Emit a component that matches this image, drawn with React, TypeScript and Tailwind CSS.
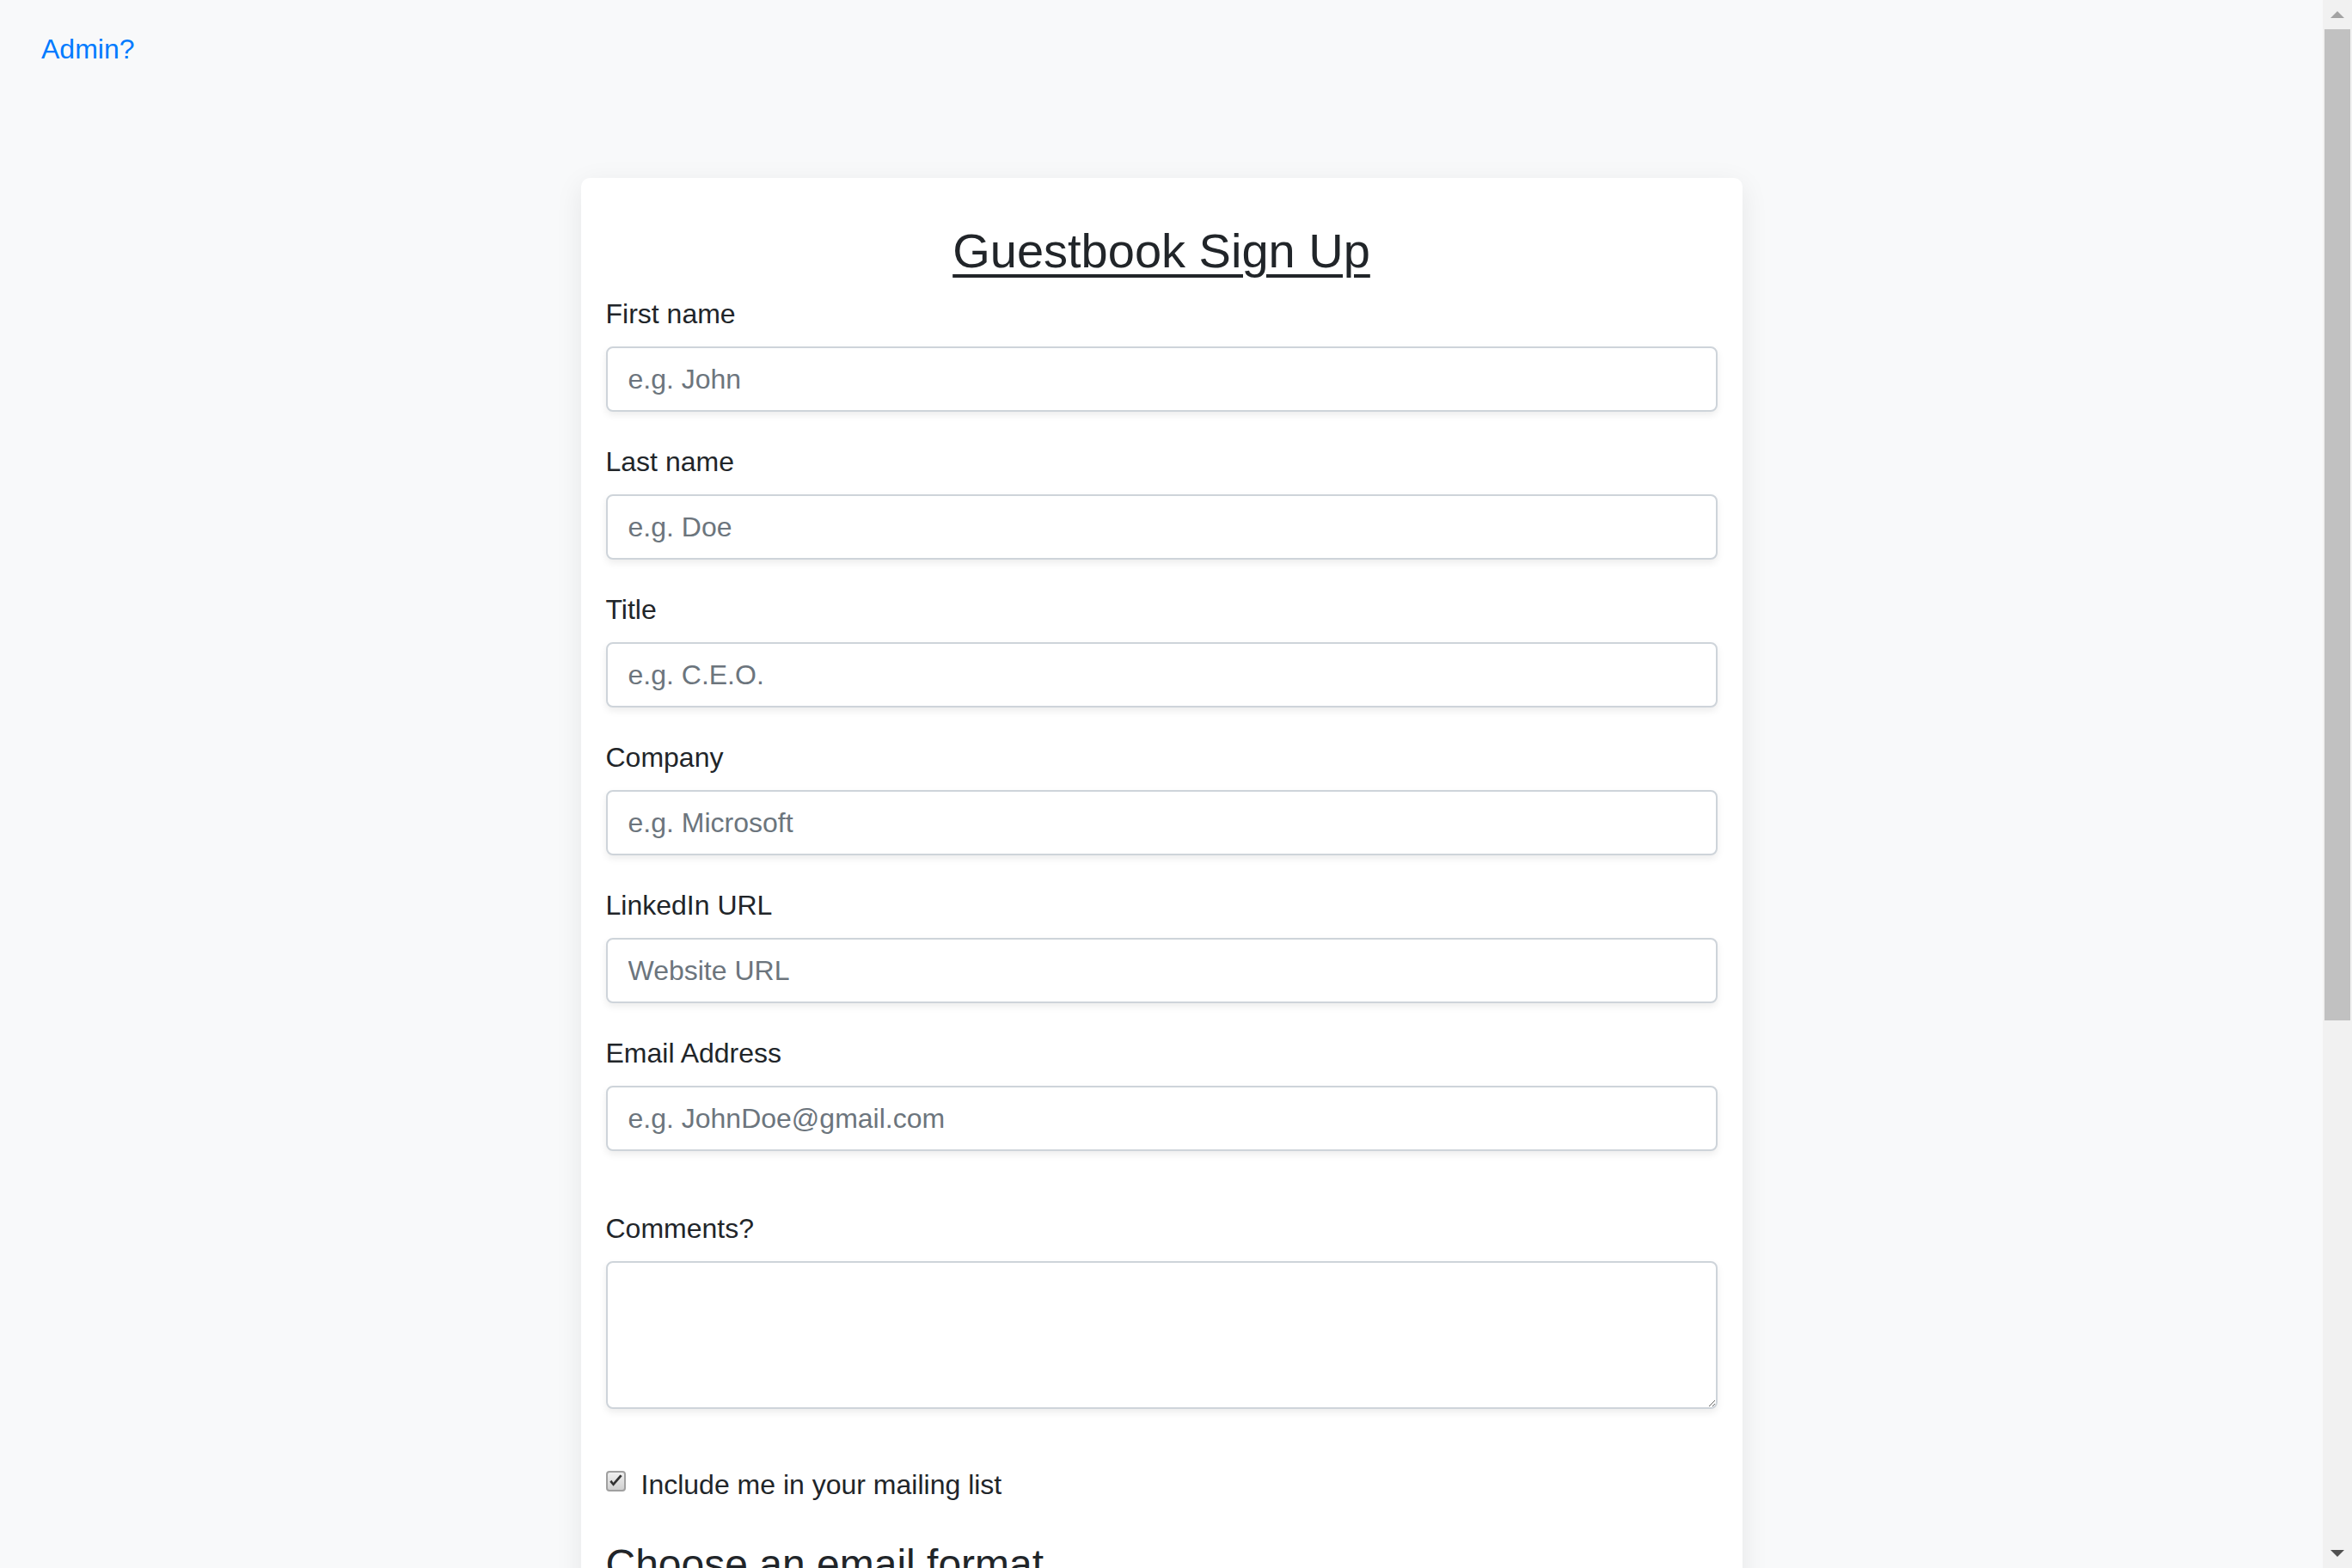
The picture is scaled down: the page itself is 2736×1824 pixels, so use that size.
import React from "react";

type Field = {
  id: string;
  label: string;
  placeholder: string;
  type: string;
};

const fields: Field[] = [
  { id: "firstName", label: "First name", placeholder: "e.g. John", type: "text" },
  { id: "lastName", label: "Last name", placeholder: "e.g. Doe", type: "text" },
  { id: "title", label: "Title", placeholder: "e.g. C.E.O.", type: "text" },
  { id: "company", label: "Company", placeholder: "e.g. Microsoft", type: "text" },
  { id: "linkedin", label: "LinkedIn URL", placeholder: "Website URL", type: "url" },
  { id: "email", label: "Email Address", placeholder: "e.g. JohnDoe@gmail.com", type: "email" },
];

const inputClass =
  "block w-full h-[76px] rounded-[8px] border-2 border-[#ced4da] bg-white px-[24px] py-[12px] text-[32px] leading-[48px] text-[#495057] placeholder:text-[#6c757d] shadow-[0_4px_8px_rgba(0,0,0,0.075)] outline-none";

const Scrollbar = () => (
  <div className="flex h-full w-[34px] shrink-0 flex-col bg-[#f1f1f1]">
    <div className="flex h-[34px] items-center justify-center">
      <svg width="16" height="10" viewBox="0 0 16 10">
        <path d="M0 9 L8 1 L16 9 Z" fill="#a3a3a3" />
      </svg>
    </div>
    <div className="flex flex-1 flex-col px-[2px]">
      <div className="h-[1153px] w-full bg-[#c1c1c1]" />
    </div>
    <div className="flex h-[34px] items-center justify-center">
      <svg width="16" height="10" viewBox="0 0 16 10">
        <path d="M0 1 L16 1 L8 9 Z" fill="#505050" />
      </svg>
    </div>
  </div>
);

const CheckBox = () => (
  <span className="mt-[8px] flex h-[24px] w-[23px] shrink-0 items-center justify-center rounded-[4px] border-2 border-[#a0a0a0] bg-gradient-to-b from-[#f0f0f0] to-[#d0d0d0]">
    <svg width="17" height="16" viewBox="0 0 16 15">
      <path
        d="M1.2 8.2 L5.2 13 L14.8 1.8 L12.6 0.4 L5.1 9.2 L3.2 6.4 Z"
        fill="#333333"
      />
    </svg>
  </span>
);

export default function App() {
  return (
    <div
      className="flex h-screen w-full overflow-hidden bg-[#f8f9fa] text-[#212529]"
      style={{ fontFamily: '"Liberation Sans", Arial, sans-serif' }}
    >
      <main className="flex-1 overflow-hidden pt-[33px]">
        <a href="#" className="ml-[48px] block w-fit text-[32px] leading-[48px] text-[#007bff]">
          Admin?
        </a>

        <div className="mx-auto mt-[126px] w-[1351px] rounded-[10px] bg-white px-[29px] pt-[51px] pb-[40px] shadow-[0_8px_32px_rgba(0,0,0,0.08)]">
          <h3 className="mb-[16px] text-center text-[56px] font-medium leading-[67px] underline underline-offset-[8px] decoration-[4px]">
            Guestbook Sign Up
          </h3>

          <form className="flex flex-col">
            {fields.map((f) => (
              <div key={f.id} className="mb-[34px]">
                <label htmlFor={f.id} className="mb-[14px] block text-[32px] leading-[48px]">
                  {f.label}
                </label>
                <input id={f.id} type={f.type} placeholder={f.placeholder} className={inputClass} />
              </div>
            ))}

            <div className="mt-[32px] mb-[34px]">
              <label htmlFor="comments" className="mb-[14px] block text-[32px] leading-[48px]">
                Comments?
              </label>
              <textarea
                id="comments"
                rows={3}
                className="block h-[172px] w-full rounded-[8px] border-2 border-[#ced4da] bg-white px-[24px] py-[12px] text-[32px] leading-[48px] shadow-[0_4px_8px_rgba(0,0,0,0.075)] outline-none"
              />
            </div>

            <label className="mt-[30px] flex items-start gap-[18px] text-[32px] leading-[48px]">
              <CheckBox />
              <span>Include me in your mailing list</span>
            </label>

            <h4 className="mt-[40px] text-[48px] font-medium leading-[58px]">Choose an email format</h4>
          </form>
        </div>
      </main>
      <Scrollbar />
    </div>
  );
}
